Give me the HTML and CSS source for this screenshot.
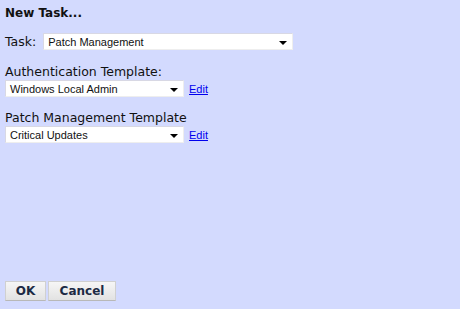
FILE: index.html
```html
<!DOCTYPE html>
<html lang="en">
<head>
  <meta charset="UTF-8" />
  <title>New Task</title>
  <link rel="stylesheet" href="styles.css">
</head>
<body>
  <div class="dialog">
    <div class="title">New Task...</div>

    <div class="task-row">
      <span class="label">Task:</span>
      <div class="select wide">
        <span class="value">Patch Management</span>
        <span class="arrow"></span>
      </div>
    </div>

    <div class="field">
      <div class="label">Authentication Template:</div>
      <div class="select-row">
        <div class="select">
          <span class="value">Windows Local Admin</span>
          <span class="arrow"></span>
        </div>
        <a href="#" class="edit">Edit</a>
      </div>
    </div>

    <div class="field">
      <div class="label">Patch Management Template</div>
      <div class="select-row">
        <div class="select">
          <span class="value">Critical Updates</span>
          <span class="arrow"></span>
        </div>
        <a href="#" class="edit">Edit</a>
      </div>
    </div>

    <div class="buttons">
      <button class="btn ok">OK</button>
      <button class="btn cancel">Cancel</button>
    </div>
  </div>
</body>
</html>
```

FILE: styles.css
```css
html, body {
  margin: 0;
  height: 100%;
}
body {
  background: #d3dafe;
  font-family: "DejaVu Sans", Verdana, sans-serif;
  color: #111;
}
.dialog {
  height: 100%;
  box-sizing: border-box;
  padding: 6px 5px 8px 5px;
  display: flex;
  flex-direction: column;
}
.title {
  font-size: 12px;
  font-weight: bold;
  line-height: 14px;
}
.task-row {
  display: flex;
  align-items: center;
  gap: 7px;
  margin-top: 13px;
}
.label {
  font-size: 12.5px;
  line-height: 14px;
}
.field {
  margin-top: 15px;
}
.field + .field {
  margin-top: 14px;
}
.select-row {
  display: flex;
  align-items: center;
  gap: 5px;
  margin-top: 1px;
}
.select {
  display: flex;
  align-items: center;
  box-sizing: border-box;
  width: 179px;
  height: 17px;
  background: #fff;
  border: 1px solid #d8d8e4;
  border-right-color: #eee;
  border-bottom-color: #eee;
  padding: 0 5px 0 4px;
  font-family: "Liberation Sans", Arial, sans-serif;
  font-size: 11px;
}
.select.wide {
  width: 250px;
}
.value {
  flex: 1;
}
.arrow {
  width: 0;
  height: 0;
  border-left: 4px solid transparent;
  border-right: 4px solid transparent;
  border-top: 4px solid #000;
  margin-top: 2px;
}
.edit {
  font-family: "Liberation Sans", Arial, sans-serif;
  font-size: 11px;
  color: #0000ee;
}
.buttons {
  margin-top: auto;
  display: flex;
  gap: 2px;
}
.btn {
  height: 20px;
  padding: 0;
  border: 1px solid #d0d0d0;
  border-bottom-color: #b8b8b8;
  background: linear-gradient(#f6f6f6, #e2e2e2);
  font-family: "DejaVu Sans", Verdana, sans-serif;
  font-weight: bold;
  font-size: 12px;
  color: #1c2a44;
}
.ok {
  width: 41px;
}
.cancel {
  width: 68px;
}
```
